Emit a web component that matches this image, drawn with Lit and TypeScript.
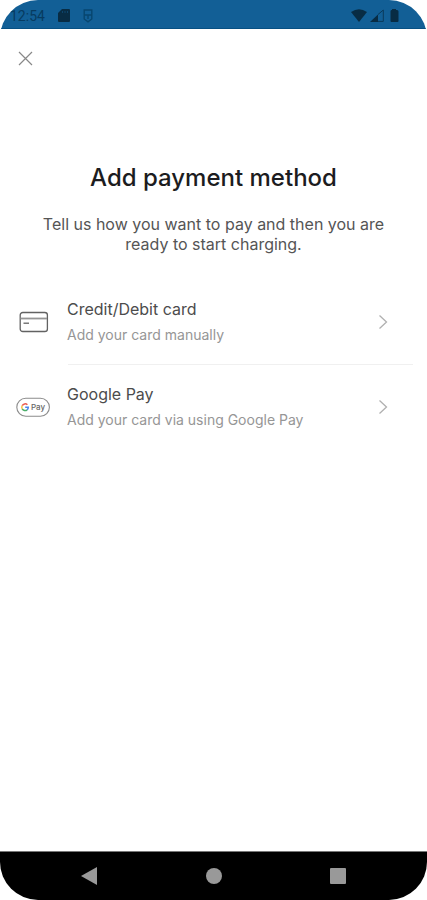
import { LitElement, html, css } from "lit";
import { customElement } from "lit/decorators.js";

const cardIcon = html`<svg class="icon" width="34" height="24" viewBox="0 0 34 24" fill="none" stroke="#626262" stroke-width="1.3" aria-hidden="true">
  <rect x="4.2" y="2.5" width="27.2" height="19" rx="2.6" />
  <path d="M4.500 8.5h26.500" stroke="#959595" stroke-width="1.8" /><path d="M7.500 13.2h5.500" />
</svg>`;

const gpayIcon = html`<svg class="icon" width="34" height="24" viewBox="0 0 34 24" fill="none" aria-hidden="true">
  <rect x="0.8" y="3.2" width="32.6" height="18" rx="9" stroke="#8c8c8c" stroke-width="1.1" />
  <g stroke-width="1.5">
    <path d="M11.4 9.8A3.3 3.3 0 0 0 6.2 10.6" stroke="#ea5a50" />
    <path d="M6.2 10.6a3.3 3.3 0 0 0 0 3.2" stroke="#f4c542" />
    <path d="M6.2 13.8a3.3 3.3 0 0 0 4.9 1" stroke="#4caf68" />
    <path d="M11.1 14.8a3.3 3.3 0 0 0 1.2-2.6H9.2" stroke="#4b87ee" />
  </g>
  <text class="pay" x="15" y="15">Pay</text>
</svg>`;

const methods = [
  { icon: cardIcon, title: "Credit/Debit card", note: "Add your card manually" },
  { icon: gpayIcon, title: "Google Pay", note: "Add your card via using Google Pay" },
];

@customElement("app-root")
export class AppRoot extends LitElement {
  static styles = css`
    :host {
      display: flex;
      flex-direction: column;
      min-height: 100vh;
      background: #fff;
      border-radius: 38px;
      overflow: hidden;
      font-family: Inter, "Noto Sans", sans-serif;
      color: #333;
    }
    button {
      border: 0;
      margin: 0;
      padding: 0;
      background: none;
      font: inherit;
      color: inherit;
      cursor: pointer;
    }
    svg { display: block; }
    .status {
      display: flex;
      align-items: center;
      height: 29px;
      box-sizing: border-box;
      padding: 3px 26px 0 10px;
      background: #125f96;
      border-bottom: 1px solid #075083;
      color: #073b60;
      font-family: Roboto, sans-serif;
      font-size: 14px;
    }
    .left { flex: 1; display: flex; align-items: center; gap: 13px; }
    .right { display: flex; align-items: center; gap: 3px; }
    .close { align-self: flex-start; margin: 18px 14px; padding: 4px; }
    main { flex: 1; }
    h1 {
      margin: 74px 16px 0;
      text-align: center;
      font-size: 24px;
      line-height: 32px;
      font-weight: 500;
      color: #1c1c20;
    }
    .intro {
      margin: 20px 40px 0;
      text-align: center;
      font-size: 16px;
      line-height: 20px;
      color: #555;
    }
    ul { list-style: none; margin: 26px 0 0; padding: 0; }
    .row {
      display: flex;
      align-items: center;
      width: 100%;
      height: 84px;
      padding: 0 36px 0 16px;
      text-align: left;
    }
    .words { flex: 1; margin-left: 17px; display: flex; flex-direction: column; gap: 4px; }
    .name { font-size: 16px; line-height: 22px; color: #4c4c4c; }
    .note { font-size: 14px; line-height: 22px; color: #969696; }
    .line { height: 1px; margin: 0 14px 0 68px; background: #f0f0f0; }
    .pay { font: 500 8px Inter, sans-serif; fill: #666; }
    .nav {
      display: flex;
      justify-content: space-between;
      align-items: center;
      height: 49px;
      box-sizing: border-box;
      padding: 0 81px;
      background: #000;
      border-top: 1px solid #777;
    }
  `;

  render() {
    return html`
      <header class="status">
        <div class="left">
          <span>12:54</span>
          <svg width="12" height="13" viewBox="0 0 12 13" aria-hidden="true">
            <path d="M4 0h7q1 0 1 1v11q0 1-1 1H1q-1 0-1-1V4z" fill="#082c44" />
            <path d="M4.5 2v2M7 2v2M9.500 2v2" stroke="#125f96" stroke-width=".5" />
          </svg>
          <svg width="10" height="14" viewBox="0 0 10 14" fill="none" stroke="#07466f" stroke-width="1.4" aria-hidden="true">
            <path d="M1.200 1h7.600v9L5 12.800 1.200 10zM1.200 6h7.600M5 6v4" />
          </svg>
        </div>
        <div class="right">
          <svg width="16" height="13" viewBox="0 0 16 13" aria-hidden="true"><path d="M0 3q8-5.500 16 0L8 13z" fill="#082c44" /></svg>
          <svg width="14" height="13" viewBox="0 0 14 13" aria-hidden="true">
            <path d="M0 13 8 5.500V13z" fill="#082c44" /><path d="M8 5.500 13.300 1v11.400H8" fill="none" stroke="#0a3a5a" />
          </svg>
          <svg class="battery" width="14" height="13" viewBox="0 0 14 13" aria-hidden="true"><path d="M5 0h4v1h1q1.500 0 1.500 1.500V12q0 1-1 1h-6q-1 0-1-1V2.500Q3.500 1 4.500 1H5z" fill="#082c44" /></svg>
        </div>
      </header>
      <button class="close" aria-label="Close">
        <svg width="15" height="15" viewBox="0 0 15 15" fill="none" stroke="#888" stroke-width="1.2"><path d="M1 1l13 13M14 1 1 14" /></svg>
      </button>
      <main>
        <h1>Add payment method</h1>
        <p class="intro">Tell us how you want to pay and then you are ready to start charging.</p>
        <ul>
          ${methods.map((m, i) => html`
            <li>
              ${i ? html`<div class="line"></div>` : ""}
              <button class="row">
                ${m.icon}
                <span class="words"><span class="name">${m.title}</span><span class="note">${m.note}</span></span>
                <svg width="16" height="16" viewBox="0 0 16 16" fill="none" stroke="#b0b0b0" stroke-width="1.3" aria-hidden="true"><path d="M4.500 1.500 11.500 8l-7 6.500" /></svg>
              </button>
            </li>`)}
        </ul>
      </main>
      <nav class="nav">
        <button aria-label="Back"><svg width="16" height="18" viewBox="0 0 16 18" fill="#999"><path d="M0 9 16 0v18z" /></svg></button>
        <button aria-label="Home"><svg width="16" height="18" viewBox="0 0 16 18" fill="#999"><circle cx="8" cy="9" r="8" /></svg></button>
        <button aria-label="Recent apps"><svg width="16" height="18" viewBox="0 0 16 18" fill="#999"><rect y="1" width="16" height="16" rx="1" /></svg></button>
      </nav>
    `;
  }
}
